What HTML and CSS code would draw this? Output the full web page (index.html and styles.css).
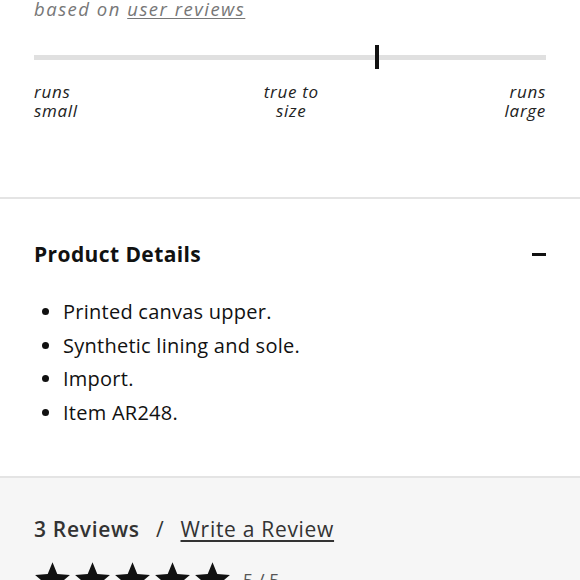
FILE: index.html
```html
<!DOCTYPE html>
<html>
<head>
<meta charset="utf-8">
<link rel="stylesheet" href="styles.css">
</head>
<body>
<section class="fit">
  <p class="fit-note">based on <a class="fit-link">user reviews</a></p>
  <div class="track"><span class="marker" style="left: 67%"></span></div>
  <div class="fit-labels">
    <span class="lbl lbl-left">runs<br>small</span>
    <span class="lbl lbl-mid">true to<br>size</span>
    <span class="lbl lbl-right">runs<br>large</span>
  </div>
</section>
<section class="details">
  <div class="details-head">
    <h2 class="details-title">Product Details</h2>
    <span class="collapse"></span>
  </div>
  <ul class="details-list">
    <li>Printed canvas upper.</li>
    <li>Synthetic lining and sole.</li>
    <li>Import.</li>
    <li>Item AR248.</li>
  </ul>
</section>
<section class="reviews">
  <div class="reviews-head">
    <span class="count">3 Reviews</span>
    <span class="sep">/</span>
    <a class="write">Write a Review</a>
  </div>
  <div class="rating">
    <span class="stars">
      <svg class="star" viewBox="0 0 24 24"><path d="M12 1.5l3.1 7.6 8.2.6-6.3 5.3 2 8L12 18.6 5 23l2-8-6.3-5.3 8.2-.6z"/></svg>
      <svg class="star" viewBox="0 0 24 24"><path d="M12 1.5l3.1 7.6 8.2.6-6.3 5.3 2 8L12 18.6 5 23l2-8-6.3-5.3 8.2-.6z"/></svg>
      <svg class="star" viewBox="0 0 24 24"><path d="M12 1.5l3.1 7.6 8.2.6-6.3 5.3 2 8L12 18.6 5 23l2-8-6.3-5.3 8.2-.6z"/></svg>
      <svg class="star" viewBox="0 0 24 24"><path d="M12 1.5l3.1 7.6 8.2.6-6.3 5.3 2 8L12 18.6 5 23l2-8-6.3-5.3 8.2-.6z"/></svg>
      <svg class="star" viewBox="0 0 24 24"><path d="M12 1.5l3.1 7.6 8.2.6-6.3 5.3 2 8L12 18.6 5 23l2-8-6.3-5.3 8.2-.6z"/></svg>
    </span>
    <span class="score">5 / 5</span>
  </div>
</section>
</body>
</html>
```

FILE: styles.css
```css
html, body {
  margin: 0;
  padding: 0;
  background: #fff;
  font-family: "Open Sans", Lato, sans-serif;
  color: #111;
}
.fit {
  padding: 0 34px 0 34px;
  height: 199px;
  box-sizing: border-box;
  border-bottom: 2px solid #e4e4e4;
}
.fit-note {
  margin: 0;
  font-size: 18.5px;
  line-height: 18px;
  font-style: italic;
  letter-spacing: 1.5px;
  color: #777;
}
.fit-link {
  text-decoration: underline;
  text-underline-offset: 2px;
  color: #777;
}
.track {
  position: relative;
  margin-top: 37px;
  height: 5px;
  background: #e0e0e0;
}
.marker {
  position: absolute;
  top: -10px;
  width: 4px;
  height: 24px;
  margin-left: -2px;
  background: #111;
}
.fit-labels {
  margin-top: 22px;
  display: flex;
  justify-content: space-between;
  font-size: 17px;
  line-height: 19px;
  font-style: italic;
  letter-spacing: 0.7px;
  color: #222;
}
.lbl-mid { text-align: center; }
.lbl-right { text-align: right; }
.details {
  padding: 41px 34px 0 34px;
  height: 279px;
  box-sizing: border-box;
  border-bottom: 2px solid #e4e4e4;
}
.details-head {
  display: flex;
  align-items: center;
  justify-content: space-between;
}
.details-title {
  margin: 0;
  font-size: 21px;
  line-height: 28px;
  font-weight: 700;
  letter-spacing: 0.4px;
}
.collapse {
  width: 14px;
  height: 3px;
  background: #111;
}
.details-list {
  margin: 27px 0 0 0;
  padding: 0 0 0 29px;
  font-size: 20px;
  line-height: 33.7px;
  letter-spacing: 0.25px;
}
.details-list li::marker { font-size: 20px; }
.reviews {
  background: #f6f6f6;
  padding: 37px 34px 0 34px;
  height: 120px;
  box-sizing: border-box;
}
.reviews-head {
  font-size: 21px;
  line-height: 28px;
  color: #333;
  letter-spacing: 0.7px;
}
.count { font-weight: 600; }
.sep { margin: 0 10px; }
.write {
  text-decoration: underline;
  text-underline-offset: 3px;
}
.rating {
  margin-top: 17px;
  display: flex;
  align-items: flex-start;
}
.stars { display: flex; gap: 3px; }
.star { width: 37px; height: 37px; fill: #111; }
.score {
  margin-left: 12px;
  margin-top: 8px;
  font-size: 18px;
  color: #555;
}
```
